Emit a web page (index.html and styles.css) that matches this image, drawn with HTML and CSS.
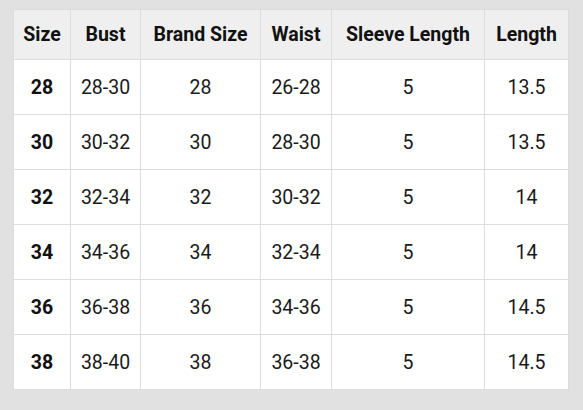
FILE: index.html
```html
<!DOCTYPE html>
<html>
<head>
<meta charset="utf-8">
<link rel="stylesheet" href="styles.css">
</head>
<body>
<table class="size-table">
  <colgroup>
    <col class="c1"><col class="c2"><col class="c3"><col class="c4"><col class="c5"><col class="c6">
  </colgroup>
  <thead>
    <tr><th>Size</th><th>Bust</th><th>Brand Size</th><th>Waist</th><th>Sleeve Length</th><th>Length</th></tr>
  </thead>
  <tbody>
    <tr><td class="sz">28</td><td>28-30</td><td>28</td><td>26-28</td><td>5</td><td>13.5</td></tr>
    <tr><td class="sz">30</td><td>30-32</td><td>30</td><td>28-30</td><td>5</td><td>13.5</td></tr>
    <tr><td class="sz">32</td><td>32-34</td><td>32</td><td>30-32</td><td>5</td><td>14</td></tr>
    <tr><td class="sz">34</td><td>34-36</td><td>34</td><td>32-34</td><td>5</td><td>14</td></tr>
    <tr><td class="sz">36</td><td>36-38</td><td>36</td><td>34-36</td><td>5</td><td>14.5</td></tr>
    <tr><td class="sz">38</td><td>38-40</td><td>38</td><td>36-38</td><td>5</td><td>14.5</td></tr>
  </tbody>
</table>
</body>
</html>
```
FILE: styles.css
```css
html, body {
  margin: 0;
  background: #e1e1e1;
}
body {
  padding: 9px 13px;
  font-family: Roboto, "Liberation Sans", sans-serif;
}
.size-table {
  border-collapse: collapse;
  table-layout: fixed;
  width: 556px;
  background: #fff;
  color: #1a1a1a;
}
.c1 { width: 57px; }
.c2 { width: 70px; }
.c3 { width: 120px; }
.c4 { width: 71px; }
.c5 { width: 153px; }
.c6 { width: 84px; }
.size-table th,
.size-table td {
  border: 1px solid #dddddd;
  padding: 0;
  text-align: center;
  vertical-align: middle;
  font-size: 19.5px;
}
.size-table thead tr { height: 50px; }
.size-table tbody tr { height: 55px; }
.size-table th {
  background: #efefef;
  font-weight: 700;
  color: #111;
}
.size-table td.sz {
  font-weight: 700;
  color: #111;
}
```
